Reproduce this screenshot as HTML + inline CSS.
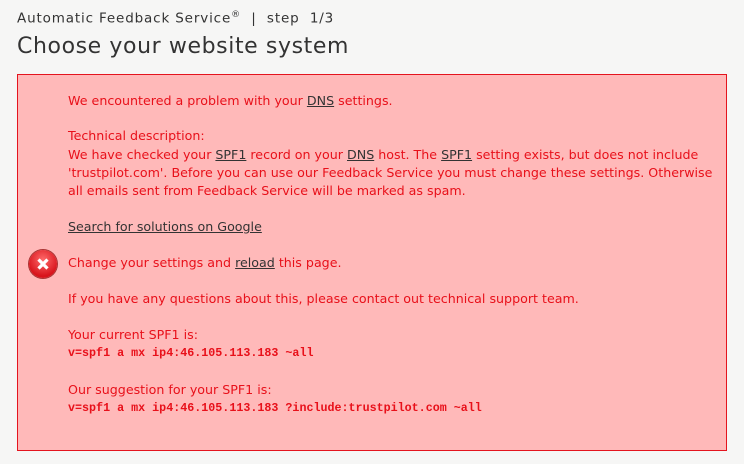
<!DOCTYPE html>
<html><head><style>
body{margin:0;width:744px;height:464px;background:#f6f6f5;font-family:"DejaVu Sans",Verdana,sans-serif;overflow:hidden;position:relative}
.hd{position:absolute;left:17px;top:10px;font-size:13.5px;letter-spacing:0.85px;color:#333}
.hd sup{font-size:9px}
h1{position:absolute;left:17px;top:34px;margin:0;font-weight:normal;font-size:22px;color:#333;letter-spacing:0.6px}
.box{position:absolute;left:17px;top:74px;width:708px;height:375px;background:#ffb9b9;border:1px solid #e4141e}
.l{position:absolute;left:50px;font-size:12.65px;color:#e8101a;white-space:nowrap}
.l u{color:#333}
.m{font-family:"Liberation Mono",monospace;font-weight:bold;font-size:11.7px}
.ic{position:absolute;left:11px;top:175px;width:28px;height:28px;border-radius:50%;background:radial-gradient(circle at 50% 35%,#ff6a6a,#d8141c 70%);box-shadow:0 0 0 1px #a33;}
</style></head><body>
<div class="hd">Automatic Feedback Service<sup>®</sup> &nbsp;| &nbsp;step &nbsp;1/3</div>
<h1>Choose your website system</h1>
<div class="box">
<div class="l" style="top:18px">We encountered a problem with your <u>DNS</u> settings.</div>
<div class="l" style="top:53px">Technical description:</div>
<div class="l" style="top:72px">We have checked your <u>SPF1</u> record on your <u>DNS</u> host. The <u>SPF1</u> setting exists, but does not include</div>
<div class="l" style="top:90px">'trustpilot.com'. Before you can use our Feedback Service you must change these settings. Otherwise</div>
<div class="l" style="top:108px">all emails sent from Feedback Service will be marked as spam.</div>
<div class="l" style="top:144px"><u>Search for solutions on Google</u></div>
<div class="ic"><svg width="28" height="28"><path d="M9.5 9.5L18.5 18.5M18.5 9.5L9.5 18.5" stroke="#fff" stroke-width="3.2"/></svg></div>
<div class="l" style="top:180px">Change your settings and <u>reload</u> this page.</div>
<div class="l" style="top:216px">If you have any questions about this, please contact out technical support team.</div>
<div class="l" style="top:252px">Your current SPF1 is:</div>
<div class="l m" style="top:271px">v=spf1 a mx ip4:46.105.113.183 ~all</div>
<div class="l" style="top:307px">Our suggestion for your SPF1 is:</div>
<div class="l m" style="top:326px">v=spf1 a mx ip4:46.105.113.183 ?include:trustpilot.com ~all</div>
</div>
</body></html>
